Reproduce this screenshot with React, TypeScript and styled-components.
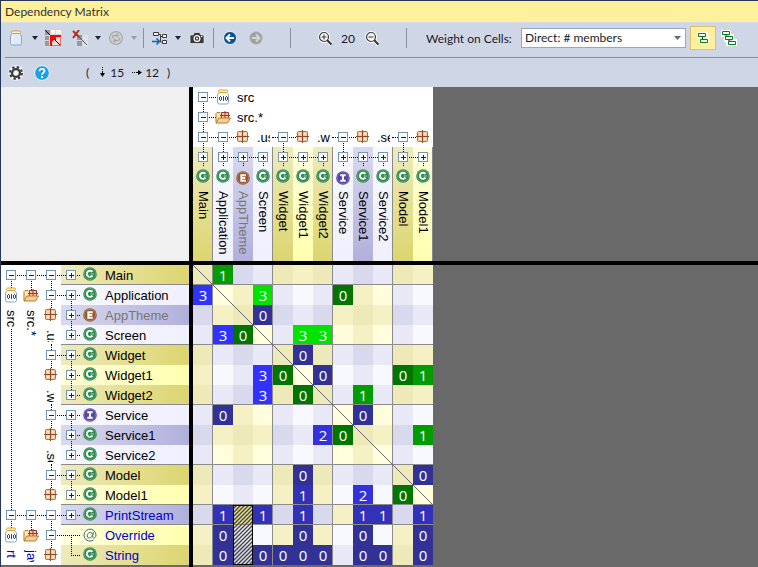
import React from "react";
import styled, { createGlobalStyle, css } from "styled-components";

const GlobalStyle = createGlobalStyle`
  * { box-sizing: border-box; }
  body { margin: 0; background: #696969; }
`;

const UI_FONT = `Lato, "Open Sans", sans-serif`;
const DIGIT_FONT = `"Open Sans", "Noto Sans", sans-serif`;
const TREE_FONT = `"Liberation Sans", Arial, sans-serif`;

type Tone = "blue" | "yellow";
type Kind = "class" | "enum" | "interface" | "annotation";
interface Item {
  name: string;
  kind: Kind;
  tone: Tone;
  dark: boolean;
  last?: boolean;
  muted?: boolean;
  external?: boolean;
  box?: boolean;
  lines: string;
}

const shared: Item[] = [
  { name: "Main", kind: "class", tone: "yellow", dark: true, last: true, lines: "lr" },
  { name: "Application", kind: "class", tone: "blue", dark: false, lines: "lrd" },
  { name: "AppTheme", kind: "enum", tone: "blue", dark: true, muted: true, lines: "urd" },
  { name: "Screen", kind: "class", tone: "blue", dark: false, last: true, lines: "ur" },
  { name: "Widget", kind: "class", tone: "yellow", dark: true, lines: "lrd" },
  { name: "Widget1", kind: "class", tone: "yellow", dark: false, lines: "urd" },
  { name: "Widget2", kind: "class", tone: "yellow", dark: true, last: true, lines: "ur" },
  { name: "Service", kind: "interface", tone: "blue", dark: false, lines: "lrd" },
  { name: "Service1", kind: "class", tone: "blue", dark: true, lines: "urd" },
  { name: "Service2", kind: "class", tone: "blue", dark: false, last: true, lines: "ur" },
  { name: "Model", kind: "class", tone: "yellow", dark: true, lines: "lrd" },
  { name: "Model1", kind: "class", tone: "yellow", dark: false, last: true, lines: "ur" },
];
const rows: Item[] = [
  ...shared,
  { name: "PrintStream", kind: "class", tone: "blue", dark: true, last: true, external: true, lines: "lr" },
  { name: "Override", kind: "annotation", tone: "yellow", dark: false, external: true, box: false, lines: "lrd" },
  { name: "String", kind: "class", tone: "yellow", dark: true, external: true, box: false, lines: "ur" },
];

/* One entry per column: "g" and "b" pick the green or blue scale, the digit is the weight, "h" is a hatched cell. */
const values: string[][] = [
  ". g1 . . . . . . . . . .",
  "b3 . . g3 . . . g0 . . . .",
  ". . . b0 . . . . . . . .",
  ". b3 g0 . . g3 g3 . . . . .",
  ". . . . . b0 . . . . . .",
  ". . . b3 g0 . b0 . . . g0 g1",
  ". . . b3 . g0 . . g1 . . .",
  ". b0 . . . . . . b0 . . .",
  ". . . . . . b2 g0 . . . g1",
  ". . . . . . . . . . . .",
  ". . . . . b0 . . . . . b0",
  ". . . . . b1 . . b2 . g0 .",
  ". b1 h b1 . b1 . . b1 b1 . b1",
  ". b0 h . . b0 . . b0 . . b0",
  ". b0 h b0 b0 b0 b0 . b0 b0 . b0",
].map((r) => r.split(" "));

const weightColors: Record<string, string> = {
  g0: "#007500", g1: "#009c00", g3: "#00e200",
  b0: "#323296", b1: "#3232b8", b2: "#3232dc", b3: "#3232ff",
};
const shades: Record<Tone, string[]> = {
  yellow: ["#fffddb", "#f6f1c5", "#ede9b8"],
  blue: ["#f8f8ff", "#e8e8f6", "#d9d9ee"],
};
const headerStops = (tone: Tone, dark: boolean) =>
  tone === "yellow"
    ? dark ? "#eeeabc, #dcd570" : "#ffffdc, #ffffb0"
    : dark ? "#d9d9ee, #b0b0dd" : "#f8f8ff, #f0f0ff";

const Page = styled.main`
  display: flex;
  flex-direction: column;
  height: 100vh;
  overflow: hidden;
  border-top: 1px solid #2a3655;
  border-left: 1px solid #2a3655;
  font-family: ${UI_FONT};
  color: #1b1b2b;
`;
const TitleBar = styled.header`
  flex: none;
  height: 21px;
  padding-left: 4px;
  background: #fff09c;
  font-size: 12px;
  line-height: 21px;
  color: #333;
`;
const Title = styled.h1`
  margin: 0;
  font-size: inherit;
  font-weight: 400;
`;
const Toolbars = styled.div`
  flex: none;
  background: #cfd6e5;
  border-top: 1px solid #d6dcea;
`;
const Toolbar = styled.div`
  display: flex;
  align-items: center;
  height: 35px;
  margin-left: 4px;
  padding: 0 4px 4px;
  border-bottom: 1px solid #8591a2;
  font-size: 12px;
`;
const StatusBar = styled.div`
  display: flex;
  align-items: center;
  height: 29px;
  padding-left: 6px;
  font-size: 12px;
`;
const IconButton = styled.button<{ $w?: number; $gap?: number }>`
  display: flex;
  flex: none;
  align-items: center;
  justify-content: center;
  width: ${(p) => p.$w ?? 18}px;
  height: 24px;
  margin: 0 0 0 ${(p) => p.$gap ?? 0}px;
  padding: 0;
  border: 0;
  background: none;
  color: #1b2540;
  &:disabled { color: #9a9ea8; }
`;
const ToggleButton = styled(IconButton)<{ $on?: boolean }>`
  width: 26px;
  ${(p) => p.$on && css`
    background: #fff09c;
    border: 1px solid #dcc070;
  `}
`;
const Divider = styled.span<{ $before: number; $after: number }>`
  flex: none;
  width: 1px;
  height: 20px;
  margin: 0 ${(p) => p.$after}px 0 ${(p) => p.$before}px;
  background: #8591a2;
`;
const ZoomLevel = styled.output`
  width: 30px;
  text-align: center;
  font-size: 12px;
`;
const WeightLabel = styled.label`
  width: 95px;
  white-space: nowrap;
`;
const SelectWrap = styled.div`
  position: relative;
  width: 165px;
  height: 20px;
  margin-right: 4px;
`;
const Select = styled.select`
  appearance: none;
  width: 100%;
  height: 100%;
  padding: 0 16px 0 3px;
  border: 1px solid #9aa5bb;
  border-radius: 0;
  background: #fff;
  color: #1b1b2b;
  font: 12px/18px ${UI_FONT};
`;
const SelectArrow = styled.svg`
  position: absolute;
  right: 5px;
  top: 8px;
  pointer-events: none;
`;
const Counts = styled.div`
  display: flex;
  align-items: center;
  margin-left: 35px;
`;
const Paren = styled.span<{ $side: "left" | "right" }>`
  margin-${(p) => p.$side}: 8px;
`;
const Count = styled.span`
  margin: 0 8px 0 2px;
`;

const Workspace = styled.div`
  flex: 1;
  display: grid;
  grid-template-columns: 188px auto 1fr;
  grid-template-rows: auto auto;
  align-content: start;
  min-height: 0;
  background: #696969;
`;
const Corner = styled.div`
  background: #f0f0f0;
  border-bottom: 4px solid #000;
`;
const ColumnPane = styled.section`
  display: flex;
  flex-direction: column;
  border-left: 4px solid #000;
  border-bottom: 4px solid #000;
  background: #fff;
`;
const Filler = styled.div`
  border-bottom: 4px solid #000;
`;
const RowPane = styled.section`
  display: flex;
  align-self: start;
  background: #fff;
`;
const MatrixPane = styled.section`
  position: relative;
  border-left: 4px solid #000;
  min-height: calc(100vh - 265px);
`;

const H_DOTS = "repeating-linear-gradient(90deg, #000 0 1px, transparent 1px 2px)";
const V_DOTS = "repeating-linear-gradient(180deg, #000 0 1px, transparent 1px 2px)";
const lineLayers: Record<string, string> = {
  l: `${H_DOTS} 0 10px / 10px 1px no-repeat`,
  r: `${H_DOTS} 10px 10px / 10px 1px no-repeat`,
  u: `${V_DOTS} 10px 0 / 1px 10px no-repeat`,
  d: `${V_DOTS} 10px 10px / 1px 10px no-repeat`,
};
const Node = styled.span<{ $lines?: string }>`
  display: flex;
  flex: none;
  align-items: center;
  justify-content: center;
  width: 20px;
  height: 20px;
  background: ${(p) => (p.$lines ? p.$lines.split("").map((l) => lineLayers[l]).join(", ") : "none")};
`;
const Toggle = styled.button`
  display: block;
  width: 10px;
  height: 10px;
  padding: 0;
  border: 1px solid #7796b5;
  background:
    linear-gradient(#222, #222) 2px 4px / 5px 1px no-repeat padding-box,
    #fff;
  &[aria-expanded="false"] {
    background:
      linear-gradient(#222, #222) 2px 4px / 5px 1px no-repeat padding-box,
      linear-gradient(#222, #222) 4px 2px / 1px 5px no-repeat padding-box,
      #fff;
  }
`;
const Branch = styled.div<{ $vertical?: boolean; $span?: number }>`
  display: flex;
  flex: none;
  overflow: hidden;
  flex-direction: ${(p) => (p.$vertical ? "column" : "row")};
  ${(p) => (p.$vertical ? "width" : "height")}: 20px;
  ${(p) => p.$span && (p.$vertical ? `height: ${p.$span * 20}px;` : `width: ${p.$span * 20}px;`)}
`;
const Lane = styled.div<{ $vertical?: boolean }>`
  display: flex;
  flex: none;
  flex-direction: ${(p) => (p.$vertical ? "column" : "row")};
  ${(p) => (p.$vertical ? "width" : "height")}: 20px;
`;
const BranchLabel = styled.span<{ $vertical?: boolean; $clip?: boolean; $external?: boolean }>`
  flex: none;
  overflow: hidden;
  white-space: nowrap;
  font: 13px/20px ${TREE_FONT};
  color: ${(p) => (p.$external ? "#0000d0" : "#000")};
  ${(p) => p.$vertical
    ? css`writing-mode: vertical-rl; margin: 5px 0 2px; ${p.$clip && "height: 12px;"}`
    : css`line-height: 22px; margin: 0 2px 0 4px; ${p.$clip && "width: 13px;"}`}
`;
const DotRun = styled.span<{ $vertical?: boolean }>`
  flex: 1;
  background: ${(p) => (p.$vertical ? `${V_DOTS} 10px 0 / 1px 100% no-repeat` : `${H_DOTS} 0 10px / 100% 1px no-repeat`)};
`;

const ItemList = styled.ul<{ $vertical?: boolean }>`
  display: flex;
  flex: 1;
  flex-direction: ${(p) => (p.$vertical ? "row" : "column")};
  margin: 0;
  padding: 0;
  list-style: none;
`;
const ItemEntry = styled.li<{ $item: Item; $vertical?: boolean }>`
  display: flex;
  flex: none;
  align-items: center;
  flex-direction: ${(p) => (p.$vertical ? "column" : "row")};
  ${(p) => (p.$vertical ? "width: 20px; height: 114px;" : "height: 20px;")}
  background: linear-gradient(${(p) => (p.$vertical ? "180deg" : "90deg")}, ${(p) => headerStops(p.$item.tone, p.$item.dark)});
  ${(p) => p.$item.last && `box-shadow: inset ${p.$vertical ? "-1px 0" : "0 -1px"} 0 #8a8a8a;`}
`;
const ItemName = styled.span<{ $item: Item; $vertical?: boolean }>`
  font: 13px/20px ${TREE_FONT};
  white-space: nowrap;
  color: ${(p) => (p.$item.muted ? "#777" : p.$item.external ? "#0000d0" : "#000")};
  ${(p) => (p.$vertical
    ? `writing-mode: vertical-rl; margin-top: ${p.$item.kind === "class" ? 8 : 6}px;`
    : "margin: 2px 0 0 8px;")}
`;
const KindSlot = styled.span<{ $vertical?: boolean; $kind: Kind }>`
  display: flex;
  flex: none;
  margin: ${(p) => {
    const plain = p.$kind === "class";
    return p.$vertical ? `${plain ? 2 : 4}px 1px 0 0` : `0 0 ${plain ? 2 : 0}px 2px`;
  }};
`;

const Table = styled.table`
  border-collapse: collapse;
  table-layout: fixed;
  width: 240px;
  background: #fff;
`;
const Cell = styled.td<{ $bg: string; $right?: boolean; $bottom?: boolean }>`
  width: 20px;
  height: 20px;
  padding: 0;
  background: ${(p) => p.$bg};
  box-shadow: inset ${(p) => (p.$right ? "-1px" : "0")} 0 0 #8c8c8c, inset 0 ${(p) => (p.$bottom ? "-1px" : "0")} 0 #8c8c8c;
  color: #fff;
  font: 15px/20px ${DIGIT_FONT};
  text-align: center;
`;
const Overlay = styled.svg`
  position: absolute;
  left: 0;
  top: 0;
  pointer-events: none;
`;

const Caret = ({ disabled }: { disabled?: boolean }) => (
  <svg width="6" height="4" aria-hidden="true"><path d="M0 0h6L3 4z" fill={disabled ? "#9a9ea8" : "#1b2540"} /></svg>
);
const Jar = ({ labelled }: { labelled?: boolean }) => (
  <svg width="14" height="16" viewBox="0 0 14 16" aria-hidden="true">
    <path d="M3.500 3.500C2 5 1.500 5.500 1.500 7v6.500Q1.500 15 3.500 15h7q2 0 2-1.500V7c0-1.500-.5-2-2-3.500z" fill={labelled ? "#fff" : "#dfeafa"} stroke="#8ba4c9" />
    <path d="M4 5.500Q3 7 3 9v4" stroke="#fff" fill="none" />
    <rect x="2.500" y="1" width="9" height="2.500" rx="1" fill="#fff3c4" stroke="#d6a62c" />
    {labelled && (
      <path
        d="M3 8h1v3H3zM5 8h1v3H5zM4 7h1v1H4zM4 11h1v1H4zM7 7h1v5H7zM9 8h1v3H9zM11 8h1v3h-1zM10 7h1v1h-1zM10 11h1v1h-1z"
        fill="#2f4a80"
      />
    )}
  </svg>
);
const Folder = () => (
  <svg width="16" height="14" viewBox="0 0 16 14" aria-hidden="true">
    <path d="M1 12.500V3.500l1-1h3l1 1h6v9z" fill="#fbe6b4" stroke="#b9772e" />
    <path d="M6.500 2.500h7v6h-7zM10 1v8M5 5.500h10" fill="#f6c9a4" stroke="#983a32" />
    <path d="M1 13 4 8h11.500l-3 5z" fill="#f9cf91" stroke="#b9772e" />
  </svg>
);
const Pack = () => (
  <svg width="14" height="14" viewBox="0 0 14 14" aria-hidden="true">
    <rect x="1.500" y="1.500" width="10" height="10" rx="1" fill="#f6c795" stroke="#bf6a32" />
    <path d="M6.500 0v13M0 6.500h13" stroke="#8a4a30" />
    <path d="M3 3h2v2H3zM8 3h2v2H8zM3 8h2v2H3zM8 8h2v2H8z" fill="#ffe8c6" />
  </svg>
);
const KindIcon = ({ kind }: { kind: Kind }) => {
  if (kind === "annotation") {
    return (
      <svg width="14" height="14" viewBox="0 0 14 14" fill="none" stroke="#356b9a" aria-hidden="true">
        <path d="M10.500 12A6 6 0 1 1 13 7c0 2-1 3-2.300 3-1 0-1.300-.8-1-2l.7-4M9.500 6.500C9 4.500 7.500 4 6.300 4.500 4.500 5.300 4 7.500 4.500 9c.8 1.700 3.500 1.300 4.800-1.500" />
      </svg>
    );
  }
  const color = kind === "class" ? "#2c8a4c" : kind === "enum" ? "#98592c" : "#5642a4";
  const glyph =
    kind === "class" ? "M9.500 4.900A3.100 3.100 0 1 0 9.500 8.700"
    : kind === "enum" ? "M9.800 4.200H5.300v5.600h4.500M5.300 7h4"
    : "M4.300 4.200h5.400M7 4v6M4.300 9.800h5.400";
  return (
    <svg width="14" height="14" viewBox="0 0 14 14" aria-hidden="true">
      <circle cx="7" cy="7" r="6.800" fill={color} />
      <circle cx="7" cy="7" r="5.700" fill="none" stroke="#fff" strokeOpacity=".3" strokeWidth=".7" />
      <path d={glyph} fill="none" stroke="#fff" strokeWidth="1.900" />
      {kind === "class" && <path d="M7.500 7H11" stroke="#fff" strokeOpacity=".6" />}
    </svg>
  );
};

const MatrixIcon = () => (
  <svg width="16" height="16" viewBox="0 0 16 16" aria-hidden="true">
    <path d="M0 0h5v5H0zM0 6h4v4H0zM0 11h4v5H0z" fill="#999" />
    <path d="M6 0h4v4H6zM11 0h5v4h-5z" fill="#fff6e4" />
    <path d="M6 6h9v9H6z" fill="#f3dcd4" />
    <path d="M5 16V5h11v2h-5v3H8v1H7v5z" fill="#f00" />
    <path d="M7.500 15.500h8v-8" fill="none" stroke="#f00" strokeDasharray="1 1" />
    <path d="m0 0 5 5M9 9l6 6" stroke="#000" />
  </svg>
);
const RemoveIcon = () => (
  <svg width="16" height="16" viewBox="0 0 16 16" aria-hidden="true">
    <path d="M5 5h5v5H5zM5 11h5v5H5z" fill="#999" />
    <path d="M11 5h5v5h-5zM11 11h5v5h-5z" fill="#e4e2dd" />
    <path d="m7 7 8 8" stroke="#555" />
    <path d="m1 1 6 6M7 0 1 8" stroke="#b52a18" strokeWidth="2" />
  </svg>
);
const RefreshIcon = () => (
  <svg width="14" height="14" viewBox="0 0 14 14" fill="none" stroke="#a8a8a8" aria-hidden="true">
    <circle cx="7" cy="7" r="6.300" strokeWidth="1.200" fill="#d3d5d9" />
    <path d="M3.500 7.500V6Q3.500 4.500 5 4.500h4M10.500 6.500V8Q10.500 9.500 9 9.500H5" strokeWidth="1.500" />
    <path d="m7.500 2.500 2 2-2 2M6.500 7.500l-2 2 2 2" strokeWidth="1.200" />
  </svg>
);
const GraphIcon = () => (
  <svg width="16" height="16" viewBox="0 0 16 16" fill="none" stroke="#3b3b3b" aria-hidden="true">
    <path d="M1.500 2.500h5v3h-5zM10.500 4.500h4v3h-4zM10.500 10.500h4v3h-4zM7 4.500h1.500v7.500H10M8.500 6.500H10" fill="#eef1f7" />
    <path d="M0 11.500h7M4.500 8.500l3 3-3 3" stroke="#0865c2" strokeWidth="1.500" />
  </svg>
);
const CameraIcon = () => (
  <svg width="16" height="14" viewBox="0 0 16 14" aria-hidden="true">
    <path d="M1 4h3l1.500-2.500h5L12 4h3v8.500H1z" fill="#3b3b3b" stroke="#e9edf5" strokeWidth=".7" />
    <circle cx="8" cy="7.500" r="2.900" fill="none" stroke="#fff" strokeWidth="1.200" />
    <circle cx="8" cy="7.500" r="1" fill="#fff" />
    <path d="M12 5.500h1.500" stroke="#fff" />
  </svg>
);
const NavIcon = ({ forward }: { forward?: boolean }) => (
  <svg width="14" height="14" viewBox="0 0 14 14" aria-hidden="true">
    <circle cx="7" cy="7" r="6.500" fill={forward ? "#a0a0a0" : "#0a4f9c"} stroke={forward ? "#c3c6cc" : "#fff"} strokeWidth=".8" />
    <path d={forward ? "M3 7h7M7 3.500 10.500 7 7 10.500" : "M11 7H4M7 3.500 3.500 7 7 10.500"} fill="none" stroke={forward ? "#d2d5db" : "#fff"} strokeWidth="2" />
  </svg>
);
const ZoomIcon = ({ plus }: { plus?: boolean }) => (
  <svg width="15" height="15" viewBox="0 0 15 15" fill="none" aria-hidden="true">
    <path d="m8.500 8.500 5 5" stroke="#fff" strokeWidth="4" />
    <circle cx="6" cy="6" r="4.500" fill="#f4f6fa" stroke="#fff" strokeWidth="3" />
    <circle cx="6" cy="6" r="4.500" fill="#f4f6fa" stroke="#3b3b3b" strokeWidth="1.200" />
    <path d="m9 9 4.500 4.500" stroke="#3b3b3b" strokeWidth="2.300" />
    <path d={plus ? "M3.500 6h5M6 3.500v5" : "M3.500 6h5"} stroke="#3b3b3b" />
  </svg>
);
const TreeIcon = ({ deep }: { deep?: boolean }) => (
  <svg width={deep ? 16 : 12} height={deep ? 16 : 12} viewBox={deep ? "0 0 16 16" : "0 0 12 12"} fill="none" aria-hidden="true">
    {deep ? (
      <g>
        <path d="M1 1h8v4h3v5h3v5H6v-4H4V6H1z" stroke="#fff" strokeWidth="2" />
        <path d="M5 4v4M8 9v4" stroke="#222" />
        <path d="M1.500 1.500h7v3h-7zM4.500 6.500h7v3h-7zM7.500 11.500h7v3h-7z" fill="#fff" stroke="#00801c" />
      </g>
    ) : (
      <g>
        <path d="M1 1h9v4h1v6H3V5H1z" stroke="#fff" strokeWidth="2" />
        <path d="M5.500 4v4" stroke="#222" />
        <path d="M1.500 1.500h7v3h-7zM3.500 7.500h7v3h-7z" fill="#fff" stroke="#00801c" />
      </g>
    )}
  </svg>
);
const GearIcon = () => (
  <svg width="16" height="16" viewBox="0 0 16 16" fill="none" aria-hidden="true">
    <circle cx="8" cy="8" r="7.800" fill="#eef1f6" />
    <circle cx="8" cy="8" r="5.900" stroke="#3b3b3b" strokeWidth="2.200" strokeDasharray="2.320 2.320" />
    <circle cx="8" cy="8" r="3.900" fill="#fff" stroke="#3b3b3b" strokeWidth="2.400" />
  </svg>
);
const HelpIcon = () => (
  <svg width="16" height="16" viewBox="0 0 16 16" fill="none" aria-hidden="true">
    <circle cx="8" cy="8" r="7.300" fill="#1ba1e2" stroke="#fff" strokeWidth=".8" />
    <path d="M5.500 6.200C5.500 4.500 6.600 3.800 8 3.800s2.500.8 2.500 2.200C10.500 7.600 8 7.800 8 9.800" stroke="#fff" strokeWidth="1.800" />
    <path d="M7 11h2v2H7z" fill="#fff" />
  </svg>
);
const CountArrow = ({ across }: { across?: boolean }) => (
  <svg width="11" height="11" viewBox="0 0 11 11" aria-hidden="true">
    {across
      ? <path d="M0 5h1v1H0zM2 5h1v1H2zM4 5h2v1H4zM6 3l4 2.500L6 8z" fill="#000" />
      : <path d="M5 0h1v1H5zM5 2h1v1H5zM5 4h1v2H5zM3 6h5l-2.500 4z" fill="#000" />}
  </svg>
);

const Expander = ({ name, open = true }: { name: string; open?: boolean }) => (
  <Toggle type="button" aria-expanded={open} aria-label={name} />
);

interface GroupProps {
  vertical?: boolean;
  span?: number;
  lines: string;
  name: string;
  icon?: "jar" | "folder" | "pack";
  label?: string;
  clip?: boolean;
  external?: boolean;
  run?: boolean;
}
const Group = ({ vertical, span, lines, name, icon, label, clip, external, run }: GroupProps) => (
  <Branch $vertical={vertical} $span={span}>
    <Node $lines={lines}><Expander name={name} /></Node>
    {icon && (
      <Node $lines={vertical ? "u" : "l"}>
        {icon === "jar" ? <Jar labelled /> : icon === "folder" ? <Folder /> : <Pack />}
      </Node>
    )}
    {label && <BranchLabel $vertical={vertical} $clip={clip} $external={external}>{label}</BranchLabel>}
    {run && <DotRun $vertical={vertical} />}
  </Branch>
);

const packages = [
  { span: 3, label: ".us", name: "Users" },
  { span: 3, label: ".w", name: "Widgets" },
  { span: 3, label: ".se", name: "Services" },
];

const turn: Record<string, string> = { l: "u", r: "d", u: "l", d: "r" };
const Items = ({ items, vertical }: { items: Item[]; vertical?: boolean }) => (
  <ItemList $vertical={vertical}>
    {items.map((it) => (
      <ItemEntry key={it.name} $item={it} $vertical={vertical}>
        <Node $lines={vertical ? it.lines.split("").map((l) => turn[l]).join("") : it.lines}>
          {it.box !== false && <Expander name={it.name} open={false} />}
        </Node>
        <KindSlot $vertical={vertical} $kind={it.kind}><KindIcon kind={it.kind} /></KindSlot>
        <ItemName $item={it} $vertical={vertical}>{it.name}</ItemName>
      </ItemEntry>
    ))}
  </ItemList>
);

const MatrixTable = () => (
  <Table aria-label="Dependencies">
    <tbody>
      {rows.map((row, r) => (
        <tr key={row.name}>
          {shared.map((col, c) => {
            const v = values[r][c];
            const tone: Tone = row.tone === col.tone ? "yellow" : "blue";
            const bg = weightColors[v] ?? shades[tone][Number(row.dark) + Number(col.dark)];
            return (
              <Cell key={col.name} $bg={bg} $right={col.last && c < 11} $bottom={row.last}>
                {weightColors[v] ? v[1] : null}
              </Cell>
            );
          })}
        </tr>
      ))}
    </tbody>
  </Table>
);

export default function App() {
  return (
    <>
      <GlobalStyle />
      <Page>
        <TitleBar><Title>Dependency Matrix</Title></TitleBar>
        <Toolbars>
          <Toolbar role="toolbar" aria-label="Matrix">
            <IconButton $w={14} aria-label="Library"><Jar /></IconButton>
            <IconButton $w={10} $gap={7} aria-label="Library options"><Caret /></IconButton>
            <IconButton $w={16} $gap={5} aria-label="Matrix view"><MatrixIcon /></IconButton>
            <IconButton $w={16} $gap={11} aria-label="Remove"><RemoveIcon /></IconButton>
            <IconButton $w={10} $gap={5} aria-label="Remove options"><Caret /></IconButton>
            <IconButton $w={14} $gap={6} disabled aria-label="Refresh"><RefreshIcon /></IconButton>
            <IconButton $w={10} $gap={6} disabled aria-label="Refresh options"><Caret disabled /></IconButton>
            <Divider $before={4} $after={8} />
            <IconButton $w={16} aria-label="Graph"><GraphIcon /></IconButton>
            <IconButton $w={10} $gap={5} aria-label="Graph options"><Caret /></IconButton>
            <IconButton $w={16} $gap={6} aria-label="Snapshot"><CameraIcon /></IconButton>
            <Divider $before={8} $after={9} />
            <IconButton $w={14} aria-label="Back"><NavIcon /></IconButton>
            <IconButton $w={14} $gap={12} disabled aria-label="Forward"><NavIcon forward /></IconButton>
            <Divider $before={27} $after={27} />
            <IconButton $w={15} aria-label="Zoom in"><ZoomIcon plus /></IconButton>
            <ZoomLevel>20</ZoomLevel>
            <IconButton $w={15} $gap={2} aria-label="Zoom out"><ZoomIcon /></IconButton>
            <Divider $before={26} $after={19} />
            <WeightLabel htmlFor="weight">Weight on Cells:</WeightLabel>
            <SelectWrap>
              <Select id="weight" defaultValue="members">
                <option value="members">Direct: # members</option>
              </Select>
              <SelectArrow width="7" height="4" aria-hidden="true"><path d="M0 0h7L3.500 4z" fill="#5c6b85" /></SelectArrow>
            </SelectWrap>
            <ToggleButton $on aria-pressed="true" aria-label="Direct"><TreeIcon /></ToggleButton>
            <ToggleButton aria-pressed="false" aria-label="Indirect"><TreeIcon deep /></ToggleButton>
          </Toolbar>
          <StatusBar>
            <IconButton aria-label="Settings"><GearIcon /></IconButton>
            <IconButton $gap={8} aria-label="Help"><HelpIcon /></IconButton>
            <Counts>
              <Paren $side="right">(</Paren>
              <CountArrow /><Count>15</Count>
              <CountArrow across /><Count>12</Count>
              <Paren $side="right">)</Paren>
            </Counts>
          </StatusBar>
        </Toolbars>
        <Workspace>
          <Corner />
          <ColumnPane aria-label="Columns">
            <Group lines="rd" name="src" icon="jar" label="src" />
            <Group lines="urd" name="src.*" icon="folder" label="src.*" />
            <Lane>
              <Group lines="urd" name="Default" />
              {packages.map((p) => (
                <Group key={p.name} span={p.span} lines="lrd" name={p.name} icon="pack" label={p.label} clip run />
              ))}
              <Group span={2} lines="lrd" name="Models" icon="pack" />
            </Lane>
            <Items items={shared} vertical />
          </ColumnPane>
          <Filler />
          <RowPane aria-label="Rows">
            <Lane $vertical>
              <Group vertical span={12} lines="rd" name="src" icon="jar" label="src" run />
              <Group vertical span={3} lines="urd" name="rt" icon="jar" label="rt" external />
            </Lane>
            <Lane $vertical>
              <Group vertical span={12} lines="lrd" name="src.*" icon="folder" label="src.*" />
              <Group vertical span={3} lines="lrd" name="java" icon="folder" label="jav" clip external />
            </Lane>
            <Lane $vertical>
              <Group vertical lines="lrd" name="Default" />
              {packages.map((p) => (
                <Group key={p.name} vertical span={p.span} lines="urd" name={p.name} icon="pack" label={p.label} clip run />
              ))}
              <Group vertical span={2} lines="urd" name="Models" icon="pack" />
              <Group vertical lines="lrd" name="java.io" />
              <Group vertical span={2} lines="urd" name="java.lang" icon="pack" />
            </Lane>
            <Items items={rows} />
          </RowPane>
          <MatrixPane aria-label="Matrix">
            <MatrixTable />
            <Overlay width="240" height="300" aria-hidden="true">
              <defs>
                <pattern id="hatch" width="4" height="4" patternUnits="userSpaceOnUse">
                  <path d="M-1 1 1-1M0 4l4-4M3 5l2-2" stroke="#444" strokeWidth="1.300" />
                </pattern>
              </defs>
              <path d="m0 0 240 240" stroke="#667" />
              <rect x="40" y="240" width="20" height="20" fill="#d8c830" fillOpacity=".3" />
              <rect x="40.500" y="240.500" width="19" height="59" fill="url(#hatch)" stroke="#000" />
            </Overlay>
          </MatrixPane>
        </Workspace>
      </Page>
    </>
  );
}
